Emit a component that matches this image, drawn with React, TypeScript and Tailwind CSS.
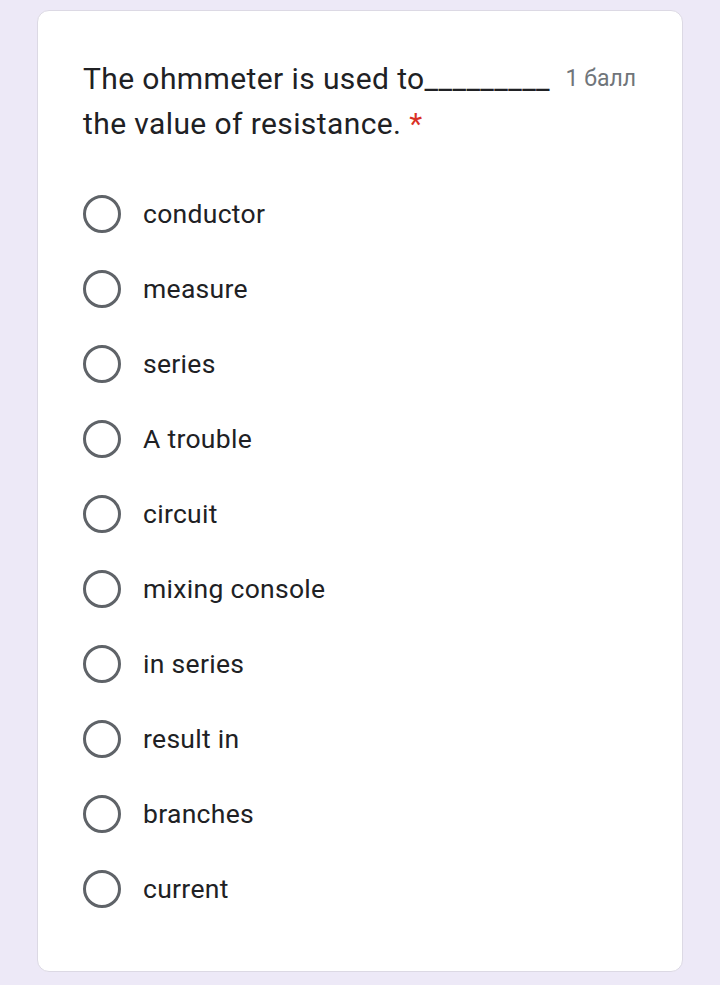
import React from "react";

const options = [
  "conductor",
  "measure",
  "series",
  "A trouble",
  "circuit",
  "mixing console",
  "in series",
  "result in",
  "branches",
  "current",
];

export default function App() {
  return (
    <div
      className="w-[720px] h-[985px] bg-[#ede9f7] pt-[10px] px-[37px]"
      style={{ fontFamily: "Roboto, 'Noto Sans', sans-serif" }}
    >
      <div className="h-[962px] bg-white rounded-[12px] border border-[#dcd9e4] pl-[45px] pr-[46px] pt-[45px]">
        <div className="flex items-start">
          <div className="flex-1 text-[30px] tracking-[0.4px] leading-[45px] text-[#202124]">
            The ohmmeter is used to_________ the value of resistance.{" "}
            <span className="text-[#d93025]">*</span>
          </div>
          <div className="ml-3 text-[23px] leading-[45px] text-[#70757a] whitespace-nowrap">
            1 балл
          </div>
        </div>
        <div className="mt-[30px] flex flex-col">
          {options.map((o) => (
            <div key={o} className="h-[75px] flex items-center">
              <div className="w-[38px] h-[38px] rounded-full border-[3px] border-[#5f6368]" />
              <div className="ml-[22px] text-[26.5px] tracking-[0.3px] text-[#202124]">{o}</div>
            </div>
          ))}
        </div>
      </div>
    </div>
  );
}
